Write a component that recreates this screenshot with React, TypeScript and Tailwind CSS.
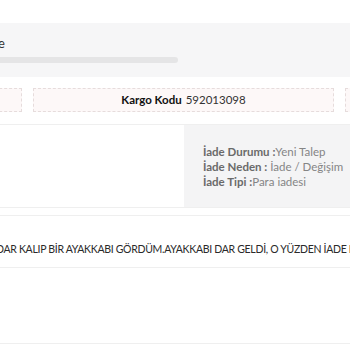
import React from "react";

export default function App() {
  return (
    <div className="w-[350px] h-[350px] overflow-hidden bg-white font-['Lato',sans-serif] text-[#333]">
      <div className="h-[23px]"></div>

      {/* tracking band */}
      <div className="h-[54px] bg-[#f6f6f7] pt-[12px]">
        <p className="text-[13px] leading-[16px] ml-[-2px]">e</p>
        <div className="mt-[6px] h-[6px] w-[178px] bg-[#e5e5e6] rounded-r-full"></div>
      </div>

      {/* cargo boxes */}
      <div className="flex gap-[11px] mt-[11px] ml-[-80px] whitespace-nowrap">
        <div className="w-[102px] h-[24px] shrink-0 border border-dashed border-[#e6dcdc] bg-[#fdf8f8]"></div>
        <div className="w-[301px] h-[24px] shrink-0 border border-dashed border-[#e6dcdc] bg-[#fdf8f8] flex items-center justify-center text-[11.5px]">
          <span className="font-bold text-[#111]">Kargo Kodu</span>
          <span className="ml-[4px] text-[#333]">592013098</span>
        </div>
        <div className="w-[100px] h-[24px] shrink-0 border border-dashed border-[#e6dcdc] bg-[#fdf8f8]"></div>
      </div>

      {/* return info */}
      <div className="mt-[12px] border-t border-[#efefef] border-b flex h-[84px]">
        <div className="flex-1"></div>
        <div className="w-[166px] bg-[#f4f4f5] pl-[19px] pt-[20px] text-[11.5px] leading-[14px] text-[#858585] whitespace-nowrap">
          <p>
            <span className="font-bold text-[#6a6a6a]">İade Durumu :</span>Yeni Talep
          </p>
          <p className="mt-[1px]">
            <span className="font-bold text-[#6a6a6a]">İade Neden :</span> İade / Değişim
          </p>
          <p className="mt-[1px]">
            <span className="font-bold text-[#6a6a6a]">İade Tipi :</span>Para iadesi
          </p>
        </div>
      </div>

      {/* customer note */}
      <div className="mt-[7px] border-t border-b border-[#efefef] h-[53px] pt-[25px]">
        <p className="ml-[-4px] whitespace-nowrap text-[10.5px] leading-[16px] tracking-[-0.3px] text-[#2a2a2a]">
          DAR KALIP BİR AYAKKABI GÖRDÜM.AYAKKABI DAR GELDİ, O YÜZDEN İADE ETMEK İSTİYORUM.
        </p>
      </div>

      <div className="h-[76px] border-b border-[#efefef]"></div>
    </div>
  );
}
